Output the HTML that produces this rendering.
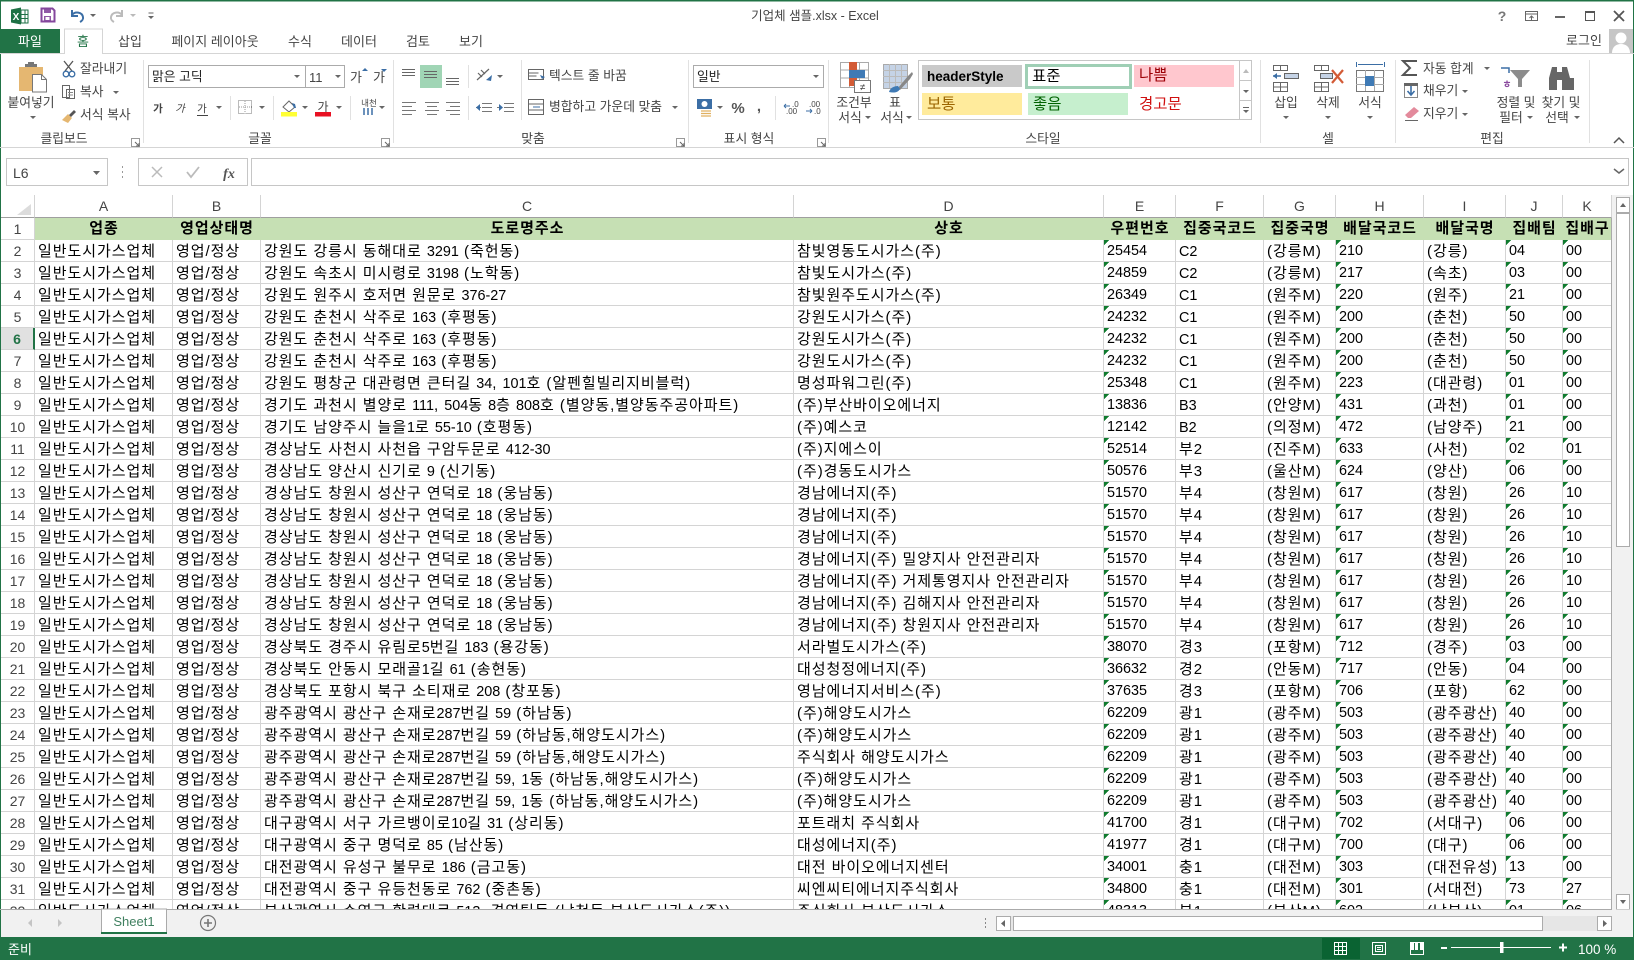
<!DOCTYPE html>
<html lang="ko"><head><meta charset="utf-8"><title>기업체 샘플.xlsx - Excel</title>
<style>
html,body{margin:0;padding:0;background:#fff;width:1634px;height:960px;overflow:hidden}
body{position:relative;font-family:"Liberation Sans","Noto Sans CJK SC",sans-serif}
svg.ui{position:absolute;left:0;top:0;font-family:"Liberation Sans","Noto Sans CJK SC",sans-serif}
svg.ui text{fill:#444;font-size:12.8px}
svg.ui text.m{text-anchor:middle}
#grid{position:absolute;left:1px;top:195px;width:1611px;height:714px;overflow:hidden}
table{border-collapse:separate;border-spacing:0;table-layout:fixed;width:1611px;font-size:15px;letter-spacing:.95px;color:#000}
tr{height:22px}
td{height:19px;line-height:19px;padding:2px 0 0 3px;border-right:1px solid #d4d4d4;border-bottom:1px solid #d4d4d4;white-space:nowrap;overflow:hidden;box-sizing:content-box}
i{font-style:normal;letter-spacing:0;font-size:14.4px;line-height:0}
td:first-child{padding:2px 0 0;text-align:center;color:#444;font-size:14px;letter-spacing:0}
tr.c{height:23px}
tr.c td{height:22px;line-height:22px;text-align:center;color:#444;font-size:14px;letter-spacing:0;border-bottom:1px solid #9f9f9f;padding:0}
tr.h td{background:#c6e0b4;border-right:0;border-bottom:1px solid #c6e0b4;font-weight:bold;text-align:center;padding:1px 0 0;height:20px;line-height:20px;font-size:15px}
tr.h td:first-child{background:#fff;border-right:1px solid #d4d4d4;border-bottom:1px solid #d4d4d4;font-weight:normal;color:#444;font-size:14px;letter-spacing:0}
tr.d td:nth-child(6),tr.d td:nth-child(9),tr.d td:nth-child(11),tr.d td:nth-child(12){background:linear-gradient(135deg,#0f7b2e 3.6px,transparent 3.7px) no-repeat 0 0/6px 6px;letter-spacing:0;font-size:14.4px}
tr.s td:first-child{background:#e1e1e1;color:#217346;font-weight:bold;border-right:2px solid #217346}
</style></head><body>
<div id="grid"><table>
<colgroup><col style="width:34px"><col style="width:138px"><col style="width:88px"><col style="width:533px"><col style="width:310px"><col style="width:72px"><col style="width:88px"><col style="width:72px"><col style="width:88px"><col style="width:82px"><col style="width:57px"><col style="width:49px"></colgroup>
<tr class="c"><td></td><td>A</td><td>B</td><td>C</td><td>D</td><td>E</td><td>F</td><td>G</td><td>H</td><td>I</td><td>J</td><td>K</td></tr>
<tr class="h"><td>1</td><td>업종</td><td>영업상태명</td><td>도로명주소</td><td>상호</td><td>우편번호</td><td>집중국코드</td><td>집중국명</td><td>배달국코드</td><td>배달국명</td><td>집배팀</td><td>집배구</td></tr>
<tr class="d"><td>2</td><td>일반도시가스업체</td><td>영업/정상</td><td>강원도 강릉시 동해대로 <i>3291</i> (죽헌동)</td><td>참빛영동도시가스(주)</td><td>25454</td><td><i>C2</i></td><td>(강릉M)</td><td>210</td><td>(강릉)</td><td>04</td><td>00</td></tr>
<tr class="d"><td>3</td><td>일반도시가스업체</td><td>영업/정상</td><td>강원도 속초시 미시령로 <i>3198</i> (노학동)</td><td>참빛도시가스(주)</td><td>24859</td><td><i>C2</i></td><td>(강릉M)</td><td>217</td><td>(속초)</td><td>03</td><td>00</td></tr>
<tr class="d"><td>4</td><td>일반도시가스업체</td><td>영업/정상</td><td>강원도 원주시 호저면 원문로 <i>376-27</i></td><td>참빛원주도시가스(주)</td><td>26349</td><td><i>C1</i></td><td>(원주M)</td><td>220</td><td>(원주)</td><td>21</td><td>00</td></tr>
<tr class="d"><td>5</td><td>일반도시가스업체</td><td>영업/정상</td><td>강원도 춘천시 삭주로 <i>163</i> (후평동)</td><td>강원도시가스(주)</td><td>24232</td><td><i>C1</i></td><td>(원주M)</td><td>200</td><td>(춘천)</td><td>50</td><td>00</td></tr>
<tr class="d s"><td>6</td><td>일반도시가스업체</td><td>영업/정상</td><td>강원도 춘천시 삭주로 <i>163</i> (후평동)</td><td>강원도시가스(주)</td><td>24232</td><td><i>C1</i></td><td>(원주M)</td><td>200</td><td>(춘천)</td><td>50</td><td>00</td></tr>
<tr class="d"><td>7</td><td>일반도시가스업체</td><td>영업/정상</td><td>강원도 춘천시 삭주로 <i>163</i> (후평동)</td><td>강원도시가스(주)</td><td>24232</td><td><i>C1</i></td><td>(원주M)</td><td>200</td><td>(춘천)</td><td>50</td><td>00</td></tr>
<tr class="d"><td>8</td><td>일반도시가스업체</td><td>영업/정상</td><td>강원도 평창군 대관령면 큰터길 <i>34</i>, <i>101</i>호 (알펜힐빌리지비블럭)</td><td>명성파워그린(주)</td><td>25348</td><td><i>C1</i></td><td>(원주M)</td><td>223</td><td>(대관령)</td><td>01</td><td>00</td></tr>
<tr class="d"><td>9</td><td>일반도시가스업체</td><td>영업/정상</td><td>경기도 과천시 별양로 <i>111</i>, <i>504</i>동 <i>8</i>층 <i>808</i>호 (별양동,별양동주공아파트)</td><td>(주)부산바이오에너지</td><td>13836</td><td><i>B3</i></td><td>(안양M)</td><td>431</td><td>(과천)</td><td>01</td><td>00</td></tr>
<tr class="d"><td>10</td><td>일반도시가스업체</td><td>영업/정상</td><td>경기도 남양주시 늘을<i>1</i>로 <i>55-10</i> (호평동)</td><td>(주)예스코</td><td>12142</td><td><i>B2</i></td><td>(의정M)</td><td>472</td><td>(남양주)</td><td>21</td><td>00</td></tr>
<tr class="d"><td>11</td><td>일반도시가스업체</td><td>영업/정상</td><td>경상남도 사천시 사천읍 구암두문로 <i>412-30</i></td><td>(주)지에스이</td><td>52514</td><td>부2</td><td>(진주M)</td><td>633</td><td>(사천)</td><td>02</td><td>01</td></tr>
<tr class="d"><td>12</td><td>일반도시가스업체</td><td>영업/정상</td><td>경상남도 양산시 신기로 <i>9</i> (신기동)</td><td>(주)경동도시가스</td><td>50576</td><td>부3</td><td>(울산M)</td><td>624</td><td>(양산)</td><td>06</td><td>00</td></tr>
<tr class="d"><td>13</td><td>일반도시가스업체</td><td>영업/정상</td><td>경상남도 창원시 성산구 연덕로 <i>18</i> (웅남동)</td><td>경남에너지(주)</td><td>51570</td><td>부4</td><td>(창원M)</td><td>617</td><td>(창원)</td><td>26</td><td>10</td></tr>
<tr class="d"><td>14</td><td>일반도시가스업체</td><td>영업/정상</td><td>경상남도 창원시 성산구 연덕로 <i>18</i> (웅남동)</td><td>경남에너지(주)</td><td>51570</td><td>부4</td><td>(창원M)</td><td>617</td><td>(창원)</td><td>26</td><td>10</td></tr>
<tr class="d"><td>15</td><td>일반도시가스업체</td><td>영업/정상</td><td>경상남도 창원시 성산구 연덕로 <i>18</i> (웅남동)</td><td>경남에너지(주)</td><td>51570</td><td>부4</td><td>(창원M)</td><td>617</td><td>(창원)</td><td>26</td><td>10</td></tr>
<tr class="d"><td>16</td><td>일반도시가스업체</td><td>영업/정상</td><td>경상남도 창원시 성산구 연덕로 <i>18</i> (웅남동)</td><td>경남에너지(주) 밀양지사 안전관리자</td><td>51570</td><td>부4</td><td>(창원M)</td><td>617</td><td>(창원)</td><td>26</td><td>10</td></tr>
<tr class="d"><td>17</td><td>일반도시가스업체</td><td>영업/정상</td><td>경상남도 창원시 성산구 연덕로 <i>18</i> (웅남동)</td><td>경남에너지(주) 거제통영지사 안전관리자</td><td>51570</td><td>부4</td><td>(창원M)</td><td>617</td><td>(창원)</td><td>26</td><td>10</td></tr>
<tr class="d"><td>18</td><td>일반도시가스업체</td><td>영업/정상</td><td>경상남도 창원시 성산구 연덕로 <i>18</i> (웅남동)</td><td>경남에너지(주) 김해지사 안전관리자</td><td>51570</td><td>부4</td><td>(창원M)</td><td>617</td><td>(창원)</td><td>26</td><td>10</td></tr>
<tr class="d"><td>19</td><td>일반도시가스업체</td><td>영업/정상</td><td>경상남도 창원시 성산구 연덕로 <i>18</i> (웅남동)</td><td>경남에너지(주) 창원지사 안전관리자</td><td>51570</td><td>부4</td><td>(창원M)</td><td>617</td><td>(창원)</td><td>26</td><td>10</td></tr>
<tr class="d"><td>20</td><td>일반도시가스업체</td><td>영업/정상</td><td>경상북도 경주시 유림로<i>5</i>번길 <i>183</i> (용강동)</td><td>서라벌도시가스(주)</td><td>38070</td><td>경3</td><td>(포항M)</td><td>712</td><td>(경주)</td><td>03</td><td>00</td></tr>
<tr class="d"><td>21</td><td>일반도시가스업체</td><td>영업/정상</td><td>경상북도 안동시 모래골<i>1</i>길 <i>61</i> (송현동)</td><td>대성청정에너지(주)</td><td>36632</td><td>경2</td><td>(안동M)</td><td>717</td><td>(안동)</td><td>04</td><td>00</td></tr>
<tr class="d"><td>22</td><td>일반도시가스업체</td><td>영업/정상</td><td>경상북도 포항시 북구 소티재로 <i>208</i> (창포동)</td><td>영남에너지서비스(주)</td><td>37635</td><td>경3</td><td>(포항M)</td><td>706</td><td>(포항)</td><td>62</td><td>00</td></tr>
<tr class="d"><td>23</td><td>일반도시가스업체</td><td>영업/정상</td><td>광주광역시 광산구 손재로<i>287</i>번길 <i>59</i> (하남동)</td><td>(주)해양도시가스</td><td>62209</td><td>광1</td><td>(광주M)</td><td>503</td><td>(광주광산)</td><td>40</td><td>00</td></tr>
<tr class="d"><td>24</td><td>일반도시가스업체</td><td>영업/정상</td><td>광주광역시 광산구 손재로<i>287</i>번길 <i>59</i> (하남동,해양도시가스)</td><td>(주)해양도시가스</td><td>62209</td><td>광1</td><td>(광주M)</td><td>503</td><td>(광주광산)</td><td>40</td><td>00</td></tr>
<tr class="d"><td>25</td><td>일반도시가스업체</td><td>영업/정상</td><td>광주광역시 광산구 손재로<i>287</i>번길 <i>59</i> (하남동,해양도시가스)</td><td>주식회사 해양도시가스</td><td>62209</td><td>광1</td><td>(광주M)</td><td>503</td><td>(광주광산)</td><td>40</td><td>00</td></tr>
<tr class="d"><td>26</td><td>일반도시가스업체</td><td>영업/정상</td><td>광주광역시 광산구 손재로<i>287</i>번길 <i>59</i>, <i>1</i>동 (하남동,해양도시가스)</td><td>(주)해양도시가스</td><td>62209</td><td>광1</td><td>(광주M)</td><td>503</td><td>(광주광산)</td><td>40</td><td>00</td></tr>
<tr class="d"><td>27</td><td>일반도시가스업체</td><td>영업/정상</td><td>광주광역시 광산구 손재로<i>287</i>번길 <i>59</i>, <i>1</i>동 (하남동,해양도시가스)</td><td>(주)해양도시가스</td><td>62209</td><td>광1</td><td>(광주M)</td><td>503</td><td>(광주광산)</td><td>40</td><td>00</td></tr>
<tr class="d"><td>28</td><td>일반도시가스업체</td><td>영업/정상</td><td>대구광역시 서구 가르뱅이로<i>10</i>길 <i>31</i> (상리동)</td><td>포트래치 주식회사</td><td>41700</td><td>경1</td><td>(대구M)</td><td>702</td><td>(서대구)</td><td>06</td><td>00</td></tr>
<tr class="d"><td>29</td><td>일반도시가스업체</td><td>영업/정상</td><td>대구광역시 중구 명덕로 <i>85</i> (남산동)</td><td>대성에너지(주)</td><td>41977</td><td>경1</td><td>(대구M)</td><td>700</td><td>(대구)</td><td>06</td><td>00</td></tr>
<tr class="d"><td>30</td><td>일반도시가스업체</td><td>영업/정상</td><td>대전광역시 유성구 불무로 <i>186</i> (금고동)</td><td>대전 바이오에너지센터</td><td>34001</td><td>충1</td><td>(대전M)</td><td>303</td><td>(대전유성)</td><td>13</td><td>00</td></tr>
<tr class="d"><td>31</td><td>일반도시가스업체</td><td>영업/정상</td><td>대전광역시 중구 유등천동로 <i>762</i> (중촌동)</td><td>씨엔씨티에너지주식회사</td><td>34800</td><td>충1</td><td>(대전M)</td><td>301</td><td>(서대전)</td><td>73</td><td>27</td></tr>
<tr class="d"><td>32</td><td>일반도시가스업체</td><td>영업/정상</td><td>부산광역시 수영구 황령대로 <i>513</i>, 경영팀동 (남천동,부산도시가스(주))</td><td>주식회사 부산도시가스</td><td>48313</td><td>부1</td><td>(부산M)</td><td>602</td><td>(남부산)</td><td>01</td><td>06</td></tr>
</table></div>

<svg class="ui" width="1634" height="960" viewBox="0 0 1634 960">
<defs><path id="a" d="M0 0h6l-3 3z" fill="#666"/>
<g id="l"><path d="M.5.5h8v8h-8z" fill="none" stroke="#999"/><path d="M4 4l4 4M8 5v3H5" fill="none" stroke="#666"/></g>
<g id="sep"><path d="M.5 60v83" stroke="#e1e1e1"/></g></defs>
<!-- window frame -->
<rect x="0" y="0" width="1634" height="1.5" fill="#217346"/>
<rect x="0" y="0" width="1" height="960" fill="#217346"/>
<rect x="1633" y="0" width="1" height="960" fill="#217346"/>
<!-- QAT -->
<rect x="18" y="10" width="10" height="13" fill="#fff" stroke="#1e7145"/>
<path d="M21 10v13M25 10v13M18 14.500h10M18 18.500h10" stroke="#1e7145" fill="none"/>
<path d="M11 9.500l10-2v17l-10-2z" fill="#1e7145"/>
<text x="16" y="20" class="m" style="font-size:10px;font-weight:bold;fill:#fff">X</text>
<path d="M41.500 8.500h11l2 2v11h-13z" fill="none" stroke="#84479c" stroke-width="2"/>
<path d="M44 9h7v4h-7zM44 16h7v5h-7z" fill="#84479c" opacity=".9"/><rect x="45.500" y="17" width="4" height="3" fill="#fff"/>
<path d="M72 10v6h6" fill="none" stroke="#3b6ea5" stroke-width="2"/><path d="M72 15c3-4 10-3 11 2 .5 2-1 4-3 5" fill="none" stroke="#3b6ea5" stroke-width="2"/>
<use href="#a" x="90" y="14"/>
<path d="M122 10v6h-6" fill="none" stroke="#bbb" stroke-width="2"/><path d="M122 15c-3-4-10-3-11 2-.5 2 1 4 3 5" fill="none" stroke="#bbb" stroke-width="2"/>
<use href="#a" x="130" y="14" opacity=".45"/>
<path d="M148.500 13h5" stroke="#666"/><use href="#a" x="148" y="16"/>
<text x="815" y="20" class="m" style="font-size:12.500px">기업체 샘플.xlsx - Excel</text>
<text x="1502" y="21" class="m" style="font-size:14px;font-weight:bold;fill:#777">?</text>
<path d="M1525.500 11.500h12v9h-12zM1525 14h13" fill="none" stroke="#666"/><path d="M1531.500 20v-4M1529.500 18l2-2 2 2" fill="none" stroke="#666"/>
<rect x="1555" y="16" width="10" height="2" fill="#666"/>
<path d="M1585.500 11.500h9v9h-9z" fill="none" stroke="#555"/><rect x="1585" y="11" width="10" height="2" fill="#555"/>
<path d="M1614 11l10 10M1624 11l-10 10" stroke="#555" stroke-width="1.800"/>
<!-- tabs -->
<rect x="1" y="29" width="59" height="25" fill="#217346"/>
<text x="30" y="46" class="m" style="font-size:13px;fill:#fff">파일</text>
<path d="M0 53.500h1634" stroke="#d5d5d5"/>
<path d="M64.500 54v-25h38v25" fill="#fff" stroke="#d5d5d5"/><rect x="65" y="52" width="37" height="3" fill="#fff"/>
<text x="83" y="46" class="m" style="font-size:13px;fill:#217346">홈</text>
<text x="130" y="46" class="m" style="font-size:13px">삽입</text>
<text x="215" y="46" class="m" style="font-size:13px">페이지 레이아웃</text>
<text x="300" y="46" class="m" style="font-size:13px">수식</text>
<text x="359" y="46" class="m" style="font-size:13px">데이터</text>
<text x="418" y="46" class="m" style="font-size:13px">검토</text>
<text x="471" y="46" class="m" style="font-size:13px">보기</text>
<text x="1584" y="45" class="m" style="font-size:13px">로그인</text>
<rect x="1609" y="29" width="24" height="24" fill="#c6c6c6"/>
<circle cx="1621" cy="38" r="5.500" fill="#fff"/><path d="M1612 53c0-6 4-9 9-9s9 3 9 9z" fill="#fff"/>
<!-- ribbon separators -->
<use href="#sep" x="143"/><use href="#sep" x="393"/><use href="#sep" x="688"/><use href="#sep" x="828"/><use href="#sep" x="1260"/><use href="#sep" x="1395"/><use href="#sep" x="1589"/>
<path d="M0 147.500h1634" stroke="#d5d5d5"/>
<!-- clipboard -->
<rect x="19" y="67" width="24" height="24" fill="#e5b771"/><path d="M25 67v-3h3v-2h6v2h3v3z" fill="#777"/>
<path d="M32.500 74.500h9l5 5v12.500h-14z" fill="#fff" stroke="#777"/><path d="M41.500 74.500v5h5" fill="none" stroke="#777"/>
<text x="31" y="107" class="m">붙여넣기</text><use href="#a" x="30" y="116"/>
<path d="M64 61l8 10M73 61l-8 10" stroke="#555" stroke-width="1.300"/><circle cx="66" cy="74" r="2.800" fill="none" stroke="#3b6ea5" stroke-width="1.300"/><circle cx="72" cy="74" r="2.800" fill="none" stroke="#3b6ea5" stroke-width="1.300"/>
<text x="80" y="73">잘라내기</text>
<path d="M62.500 85.500h7l0 12h-7zM66.500 89.500h8v9h-8z" fill="#fff" stroke="#666"/><path d="M68 92.500h5M68 95h5" stroke="#888"/>
<text x="80" y="96">복사</text><use href="#a" x="113" y="91"/>
<path d="M62 120l6-6 4 4-4 5z" fill="#e5b771"/><path d="M69 115l5-5 2 2-5 5z" fill="#555"/>
<text x="80" y="119">서식 복사</text>
<text x="64" y="143" class="m">클립보드</text><use href="#l" x="131" y="138"/>
<!-- font -->
<rect x="148.500" y="65.500" width="157" height="22" fill="#fff" stroke="#ababab"/><rect x="305.500" y="65.500" width="39" height="22" fill="#fff" stroke="#ababab"/>
<text x="152" y="81" style="fill:#222">맑은 고딕</text><use href="#a" x="294" y="75"/>
<text x="309" y="82" style="font-size:13px;fill:#444">11</text><use href="#a" x="335" y="75"/>
<text x="356" y="82" class="m" style="font-size:13px">가</text><path d="M362 71h6l-3-3z" fill="#3b6ea5"/>
<text x="379" y="82" class="m" style="font-size:13px">가</text><path d="M381 69h6l-3 3z" fill="#3b6ea5"/>
<text x="158" y="112" class="m" style="font-size:10.500px;font-weight:bold">가</text>
<text x="180" y="112" class="m" style="font-size:10.500px;font-style:italic">가</text>
<text x="202" y="112" class="m" style="font-size:10.500px">가</text><path d="M197 115.500h11" stroke="#444"/><use href="#a" x="216" y="106"/>
<path d="M230.500 96v24" stroke="#e1e1e1"/>
<rect x="238.500" y="100.500" width="13" height="13" fill="none" stroke="#777" stroke-dasharray="1 1"/><path d="M245 101v13M239 107h13" stroke="#999" stroke-dasharray="1 1"/><use href="#a" x="259" y="106"/>
<path d="M273.500 96v24" stroke="#e1e1e1"/>
<path d="M283 107l6-6 6 6-6 5z" fill="#fff" stroke="#666"/><path d="M292 103l3 1 1 4-2 0z" fill="#3b6ea5"/><rect x="281" y="112" width="16" height="4.500" fill="#ffff33"/><use href="#a" x="302" y="106"/>
<text x="323" y="111" class="m" style="font-size:12px;text-decoration:underline">가</text><rect x="315" y="112" width="16" height="4.500" fill="#e81123"/><use href="#a" x="336" y="106"/>
<path d="M350.500 96v24" stroke="#e1e1e1"/>
<text x="369" y="106" class="m" style="font-size:8.500px">내천</text><path d="M364 108v7M368 108v7M372 108v7" stroke="#3b6ea5" stroke-width="1.500"/><use href="#a" x="379" y="106"/>
<text x="260" y="143" class="m">글꼴</text><use href="#l" x="381" y="138"/>
<!-- align -->
<rect x="420" y="65" width="22" height="23" fill="#a0d5b5"/>
<path d="M402 69.500h13M402 72.500h13M402 75.500h13M424 74.500h13M424 77.500h13M424 71.500h13M446 78.500h13M446 81.500h13M446 84.500h13" stroke="#666"/>
<path d="M468.500 65v23" stroke="#e1e1e1"/>
<path d="M477 80l12-11M481 70l4 4M478 73l4 4" stroke="#666" stroke-width="1.200" fill="none"/><path d="M486 80l6-5-1 6z" fill="#3b6ea5"/><use href="#a" x="497" y="75"/>
<path d="M402 102.500h14M402 106.500h10M402 110.500h14M402 114.500h10M425 102.500h14M427 106.500h10M425 110.500h14M427 114.500h10M446 102.500h14M450 106.500h10M446 110.500h14M450 114.500h10" stroke="#777"/>
<path d="M468.500 96v24" stroke="#e1e1e1"/>
<path d="M482 103.500h10M482 107.500h10M482 111.500h10M476 107.500h5" stroke="#777"/><path d="M480 104l-4 3.500 4 3.500z" fill="#3b6ea5"/>
<path d="M504 103.500h10M504 107.500h10M504 111.500h10M497 107.500h5" stroke="#777"/><path d="M499 104l4 3.500-4 3.500z" fill="#3b6ea5"/>
<path d="M521.500 60v60" stroke="#e1e1e1"/>
<path d="M528.500 69.500h15v10h-15zM528.500 73h10M528.500 76h8" fill="none" stroke="#666"/><path d="M540 75l5 2-3 2z" fill="#3b6ea5"/>
<text x="549" y="80">텍스트 줄 바꿈</text>
<rect x="528.500" y="99.500" width="15" height="15" fill="none" stroke="#666"/><path d="M529 104h14M529 110h14M533 107h7" stroke="#666"/><path d="M533 107h7" stroke="#3b6ea5"/>
<text x="549" y="111">병합하고 가운데 맞춤</text><use href="#a" x="672" y="106"/>
<text x="533" y="143" class="m">맞춤</text><use href="#l" x="676" y="138"/>
<!-- number -->
<rect x="693.500" y="65.500" width="130" height="22" fill="#fff" stroke="#ababab"/><text x="697" y="81" style="fill:#222">일반</text><use href="#a" x="813" y="75"/>
<rect x="697" y="99" width="15" height="10" fill="#3b6ea5"/><circle cx="704.500" cy="104" r="3" fill="#fff"/><path d="M701 111h10M701 113.500h10M701 116h10" stroke="#e0b060" stroke-width="1.200"/><use href="#a" x="717" y="106"/>
<text x="738" y="113" class="m" style="font-size:15px;font-weight:bold;fill:#555">%</text>
<text x="759" y="111" class="m" style="font-size:15px;font-weight:bold;fill:#555">,</text>
<path d="M775.500 96v24" stroke="#e1e1e1"/>
<text x="792" y="107" style="font-size:8px">.0</text><text x="786" y="114" style="font-size:8px">.00</text><path d="M784 106h6M784 106l2-2M784 106l2 2" stroke="#3b6ea5" fill="none"/>
<text x="809" y="107" style="font-size:8px">.00</text><text x="814" y="114" style="font-size:8px">.0</text><path d="M806 111h6M812 111l-2-2M812 111l-2 2" stroke="#3b6ea5" fill="none"/>
<text x="749" y="143" class="m">표시 형식</text><use href="#l" x="817" y="138"/>
<!-- styles -->
<rect x="840.500" y="62.500" width="28" height="25" fill="#fff" stroke="#aaa"/><path d="M840 70h28M840 78h28M849.500 62v25M859.500 62v25" stroke="#aaa"/>
<rect x="849" y="62" width="8" height="8" fill="#d35b36"/><rect x="849" y="70" width="16" height="8" fill="#3f7ab5"/><rect x="849" y="78" width="8" height="8" fill="#d35b36"/>
<rect x="854.500" y="80.500" width="16" height="12" fill="#fff" stroke="#777"/><text x="862.500" y="90.500" class="m" style="font-size:10px">≠</text>
<text x="854" y="107" class="m">조건부</text><text x="850" y="122" class="m">서식</text><use href="#a" x="865" y="116"/>
<rect x="883.500" y="64.500" width="24" height="24" fill="#c5d3e6" stroke="#aaa"/><path d="M883 70.500h24M883 76.500h24M883 82.500h24M889.500 64v24M895.500 64v24M901.500 64v24" stroke="#bbb"/><path d="M898 88l10-12 4-4 1 2-3 5-10 11z" fill="#888"/><path d="M889 92c1-4 5-6 9-6l2 3c-2 4-7 4-11 3z" fill="#3f7ab5"/>
<text x="895" y="107" class="m">표</text><text x="892" y="122" class="m">서식</text><use href="#a" x="906" y="116"/>
<rect x="918.500" y="60.500" width="333" height="59" fill="#fff" stroke="#c6c6c6"/>
<rect x="922" y="65" width="100" height="22" fill="#c9c9c9"/><text x="927" y="81" style="font-size:13.500px;font-weight:bold;fill:#000">headerStyle</text>
<rect x="1026.500" y="65.500" width="104" height="22" fill="#fff" stroke="#9fcfb5" stroke-width="3"/><text x="1032" y="81" style="font-size:15.500px;fill:#000">표준</text>
<rect x="1134" y="65" width="100" height="22" fill="#ffc7ce"/><text x="1139" y="80" style="font-size:15.500px;fill:#9c0006">나쁨</text>
<rect x="922" y="93" width="100" height="22" fill="#ffeb9c"/><text x="927" y="109" style="font-size:15.500px;fill:#9c6500">보통</text>
<rect x="1028" y="93" width="100" height="22" fill="#c6efce"/><text x="1033" y="109" style="font-size:15.500px;fill:#006100">좋음</text>
<text x="1139" y="109" style="font-size:15.500px;fill:#d01010">경고문</text>
<path d="M1239.500 60v60M1239 80.500h13M1239 100.500h13" stroke="#c6c6c6"/>
<path d="M1243 73l3-4 3 4z" fill="#bbb"/><use href="#a" x="1243" y="90"/><path d="M1243 107.500h6" stroke="#666"/><use href="#a" x="1243" y="110"/>
<text x="1043" y="143" class="m">스타일</text>
<!-- cells -->
<path d="M1273.500 65.500h14v5h-14zM1280.500 65v5M1273.500 82.500h14v9h-14zM1273.500 87h14M1280.500 82v9" fill="none" stroke="#666"/>
<rect x="1284.500" y="73.500" width="14" height="5" fill="#c5d3e6" stroke="#666"/><path d="M1273 76h8" stroke="#3b6ea5" stroke-width="1.500"/><path d="M1277 73l-4 3 4 3z" fill="#3b6ea5"/>
<text x="1286" y="107" class="m">삽입</text><use href="#a" x="1283" y="116"/>
<path d="M1314.500 65.500h14v5h-14zM1321.500 65v5M1314.500 82.500h14v9h-14zM1314.500 87h14M1321.500 82v9" fill="none" stroke="#666"/>
<rect x="1320.500" y="73.500" width="12" height="5" fill="#c5d3e6" stroke="#666"/><path d="M1332 70l11 13M1343 70l-11 13" stroke="#d35b36" stroke-width="2.200"/>
<text x="1328" y="107" class="m">삭제</text><use href="#a" x="1325" y="116"/>
<path d="M1356.500 62v5M1384.500 62v5M1358 64.500h25" stroke="#3b6ea5" fill="none"/>
<rect x="1356.500" y="70.500" width="27" height="21" fill="#fff" stroke="#777"/><path d="M1356 77.500h28M1356 84.500h28M1365.500 70v21M1374.500 70v21" stroke="#aaa"/><rect x="1365" y="76" width="9" height="10" fill="#3f7ab5"/>
<text x="1370" y="107" class="m">서식</text><use href="#a" x="1367" y="116"/>
<text x="1328" y="143" class="m">셀</text>
<!-- edit -->
<path d="M1417 61h-14l7 7-7 7h14" fill="none" stroke="#555" stroke-width="2"/>
<text x="1423" y="73">자동 합계</text><use href="#a" x="1484" y="67"/>
<rect x="1404.500" y="83.500" width="13" height="14" fill="#fff" stroke="#888"/><rect x="1404" y="83" width="14" height="3" fill="#666"/><path d="M1411 86v8M1407.500 91l3.500 4 3.500-4" stroke="#3b6ea5" fill="none" stroke-width="1.600"/>
<text x="1423" y="95">채우기</text><use href="#a" x="1462" y="90"/>
<path d="M1405 115l9-8 5 4-8 7h-3z" fill="#e38a9c"/><path d="M1405 120.500h13" stroke="#666"/>
<text x="1423" y="118">지우기</text><use href="#a" x="1462" y="113"/>
<path d="M1501 68h8v5" fill="none" stroke="#3b6ea5" stroke-width="1.500"/><text x="1507" y="88" class="m" style="font-size:10px;font-weight:bold;fill:#8a4a9e">ㅎ</text><path d="M1510 70h20l-8 9v8h-4v-8z" fill="#8c8c8c"/>
<text x="1516" y="107" class="m">정렬 및</text><text x="1511" y="122" class="m">필터</text><use href="#a" x="1527" y="116"/>
<path d="M1549 90V78l3-11h5v23zM1562 90V67h5l3 11 4 0v12z M1557 72h5v8h-5z" fill="#666"/>
<text x="1561" y="107" class="m">찾기 및</text><text x="1557" y="122" class="m">선택</text><use href="#a" x="1574" y="116"/>
<text x="1492" y="143" class="m">편집</text>
<path d="M1614 143l5-5 5 5" fill="none" stroke="#555" stroke-width="1.500"/>
<!-- formula bar -->
<rect x="6.500" y="158.500" width="101" height="27" fill="#fff" stroke="#c6c6c6"/>
<text x="13" y="178" style="font-size:14px">L6</text><path d="M93 171h7l-3.500 4z" fill="#666"/>
<path d="M122.500 166v2M122.500 171v2M122.500 176v2" stroke="#999"/>
<rect x="138.500" y="158.500" width="109" height="27" fill="#fff" stroke="#c6c6c6"/>
<path d="M152 167l10 10M162 167l-10 10" stroke="#bbb" stroke-width="1.500"/>
<path d="M187 172l4 5 8-10" fill="none" stroke="#bbb" stroke-width="1.800"/>
<text x="229" y="178" class="m" style="font-family:'Liberation Serif',serif;font-style:italic;font-weight:bold;font-size:14px;fill:#555">fx</text>
<rect x="251.500" y="158.500" width="1377" height="27" fill="#fff" stroke="#c6c6c6"/>
<path d="M1614 169l5 4 5-4" fill="none" stroke="#666" stroke-width="1.500"/>
<path d="M31 204v11h-14z" fill="#dcdcdc"/>
<!-- right scrollbar -->
<rect x="1612" y="195" width="21" height="715" fill="#f1f1f1"/>
<path d="M1611.500 218v692" stroke="#aaa"/>
<rect x="1616.500" y="197.500" width="13" height="15" fill="#fff" stroke="#ababab"/><path d="M1620 207l3-4 3 4z" fill="#666"/>
<rect x="1616.500" y="213.500" width="13" height="333" fill="#fff" stroke="#ababab"/>
<rect x="1616.500" y="894.500" width="13" height="15" fill="#fff" stroke="#ababab"/><path d="M1620 900l3 4 3-4z" fill="#666"/>
<!-- sheet tabs -->
<rect x="1" y="909.500" width="1632" height="27.500" fill="#f1f1f1"/>
<path d="M0 909.500h1612" stroke="#aaa"/>
<path d="M32 919v8l-4-4zM58 919v8l4-4z" fill="#c4c4c4"/>
<rect x="101.500" y="909" width="65" height="25" fill="#fff"/>
<path d="M101.500 933v-24h65v24" fill="none" stroke="#aaa"/><rect x="101" y="932" width="66" height="2" fill="#217346"/>
<text x="134" y="926" class="m" style="font-size:13px;fill:#3f7f5f">Sheet1</text>
<circle cx="208" cy="923" r="7.500" fill="none" stroke="#777" stroke-width="1.200"/><path d="M208 919v8M204 923h8" stroke="#777" stroke-width="1.600"/>
<path d="M985.500 918v2M985.500 922v2M985.500 926v2" stroke="#888"/>
<rect x="996.500" y="916.500" width="14" height="14" fill="#fff" stroke="#ababab"/><path d="M1005 920v7l-4-3.500z" fill="#666"/>
<rect x="1011" y="916" width="586" height="15" fill="#e6e6e6"/>
<rect x="1013.500" y="916.500" width="529" height="14" fill="#fff" stroke="#ababab"/>
<rect x="1597.500" y="916.500" width="14" height="14" fill="#fff" stroke="#ababab"/><path d="M1603 920v7l4-3.500z" fill="#666"/>
<!-- status bar -->
<rect x="0" y="937" width="1634" height="23" fill="#217346"/>
<text x="8" y="954" style="font-size:13px;fill:#fff">준비</text>
<rect x="1322" y="938" width="38" height="21" fill="#0a6332"/>
<path d="M1334.500 942.500h12v12h-12zM1334 946.500h13M1334 950.500h13M1338.500 942v13M1342.500 942v13" fill="none" stroke="#fff"/>
<path d="M1372.500 942.500h13v12h-13z" fill="none" stroke="#fff"/><path d="M1375.500 945.500h7v6h-7zM1377 947.500h4M1377 949.500h4" fill="none" stroke="#fff"/>
<path d="M1410.500 942.500h13v12h-13z" fill="none" stroke="#fff"/><rect x="1415" y="942" width="3" height="8" fill="#fff"/><rect x="1420" y="942" width="3" height="8" fill="#fff"/><rect x="1411" y="942" width="3" height="8" fill="#fff"/>
<rect x="1441" y="947" width="6" height="2" fill="#fff"/>
<rect x="1451" y="947" width="100" height="1" fill="#fff"/><rect x="1500" y="942" width="3.500" height="11" fill="#fff"/>
<path d="M1559 947.500h8M1563 943.500v8" stroke="#fff" stroke-width="2"/>
<text x="1578" y="954" style="font-size:13.500px;fill:#fff">100 %</text>
</svg>
</body></html>
